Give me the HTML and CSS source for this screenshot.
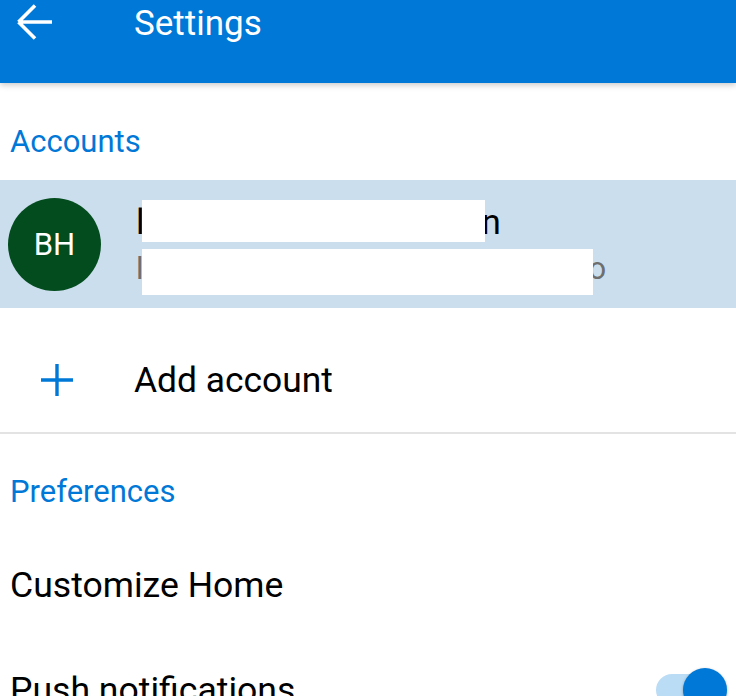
FILE: index.html
```html
<!DOCTYPE html>
<html lang="en">
<head>
    <meta charset="UTF-8">
    <meta name="viewport" content="width=device-width, initial-scale=1.0">
    <title>Settings</title>
    <link rel="stylesheet" href="styles.css">
</head>
<body>
    <div class="app">
        <!-- Toolbar -->
        <div class="toolbar">
            <svg class="back-icon" width="38" height="36" viewBox="0 0 38 36">
                <path d="M3.5 18 H37 M3.5 18 L20 1.5 M3.5 18 L20 34.5" fill="none" stroke="#fff" stroke-width="3.6"/>
            </svg>
            <h1 class="title">Settings</h1>
        </div>

        <!-- Accounts -->
        <h2 class="section-title">Accounts</h2>

        <div class="account-row">
            <div class="avatar">BH</div>
            <div class="account-text">
                <div class="account-name">l<span class="gap-name"></span>n<span class="redact redact-name"></span></div>
                <div class="account-email">l<span class="gap-email"></span>o<span class="redact redact-email"></span></div>
            </div>
        </div>

        <div class="add-row">
            <svg class="plus-icon" width="32" height="32" viewBox="0 0 32 32">
                <path d="M16 0 V32 M0 16 H32" fill="none" stroke="#0078d7" stroke-width="3.4"/>
            </svg>
            <span class="add-label">Add account</span>
        </div>

        <!-- Preferences -->
        <h2 class="section-title section-title-pref">Preferences</h2>

        <div class="pref-item">
            <span>Customize Home</span>
        </div>

        <div class="pref-item">
            <span>Push notifications</span>
            <div class="switch">
                <div class="switch-track"></div>
                <div class="switch-thumb"></div>
            </div>
        </div>
    </div>
</body>
</html>
```

FILE: styles.css
```css
* {
    margin: 0;
    padding: 0;
    box-sizing: border-box;
}

body {
    font-family: Roboto, 'Noto Sans', sans-serif;
    background: white;
    color: #000;
    height: 100vh;
    overflow: hidden;
}

/* Toolbar */
.toolbar {
    display: flex;
    align-items: flex-start;
    height: 83px;
    background: #0078d7;
    box-shadow: 0 2px 6px rgba(0, 0, 0, 0.22);
    position: relative;
    z-index: 1;
}

.back-icon {
    margin: 4px 0 0 15px;
}

.title {
    margin-left: 81px;
    font-size: 35px;
    font-weight: 400;
    line-height: 48px;
    color: white;
}

/* Section headers */
.section-title {
    padding: 41px 10px 20px;
    font-size: 31px;
    font-weight: 400;
    line-height: 36px;
    color: #0078d7;
}

.section-title-pref {
    padding: 40px 10px 22px;
}

/* Account row */
.account-row {
    display: flex;
    align-items: center;
    height: 128px;
    padding-left: 8px;
    background: #cbdeed;
}

.avatar {
    width: 93px;
    height: 93px;
    border-radius: 50%;
    background: #034c1e;
    color: white;
    font-size: 31px;
    display: flex;
    align-items: center;
    justify-content: center;
    flex-shrink: 0;
}

.account-text {
    align-self: flex-start;
    padding-top: 21px;
    margin-left: 35px;
}

.account-name,
.account-email {
    position: relative;
    white-space: nowrap;
}

.account-name {
    font-size: 35px;
    line-height: 44px;
}

.account-email {
    margin-top: 4px;
    font-size: 31px;
    line-height: 40px;
    color: #6e6e6e;
}

.gap-name {
    display: inline-block;
    width: 337px;
}

.gap-email {
    display: inline-block;
    width: 445px;
}

/* white boxes hiding the address */
.redact {
    position: absolute;
    background: white;
}

.redact-name {
    left: 6px;
    top: -1px;
    width: 343px;
    height: 42px;
}

.redact-email {
    left: 6px;
    top: 0;
    width: 451px;
    height: 46px;
}

/* Add account */
.add-row {
    display: flex;
    align-items: center;
    height: 126px;
    padding-top: 20px;
    border-bottom: 2px solid #e3e3e3;
}

.plus-icon {
    margin-left: 41px;
}

.add-label {
    margin-left: 61px;
    font-size: 35.4px;
    line-height: 44px;
}

/* Preference items */
.pref-item {
    display: flex;
    align-items: center;
    justify-content: space-between;
    height: 105px;
    padding: 0 9px 0 10px;
    font-size: 35.6px;
    line-height: 44px;
}

.switch {
    position: relative;
    width: 71px;
    height: 44px;
}

.switch-track {
    position: absolute;
    left: 0;
    top: 6px;
    width: 64px;
    height: 32px;
    border-radius: 16px;
    background: #bbdcf5;
}

.switch-thumb {
    position: absolute;
    left: 27px;
    top: 0;
    width: 44px;
    height: 44px;
    border-radius: 50%;
    background: #0078d7;
    box-shadow: 0 1px 3px rgba(0, 0, 0, 0.3);
}
```
